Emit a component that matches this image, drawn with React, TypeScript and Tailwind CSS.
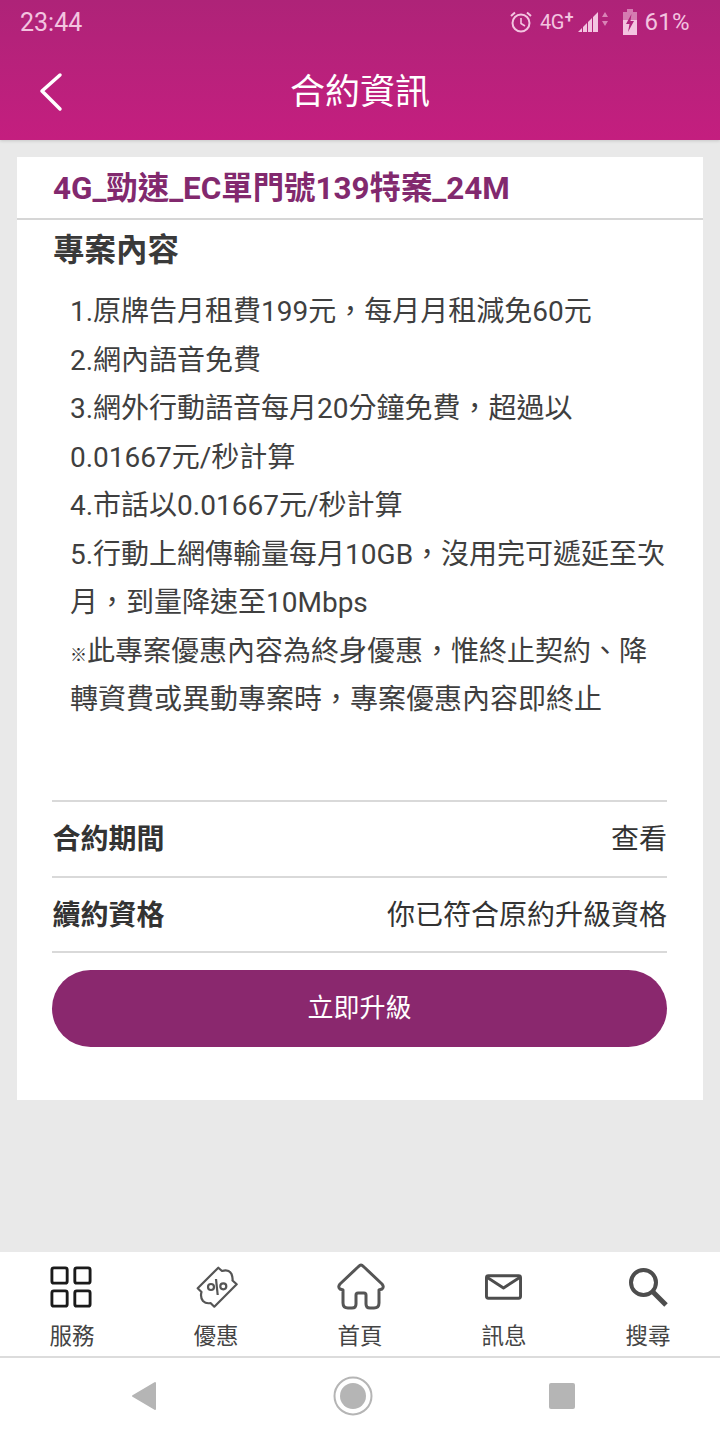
import React from "react";

const FONT = "font-['Roboto','Noto_Sans_CJK_TC',sans-serif]";

const lines: React.ReactNode[] = [
  "1.原牌告月租費199元，每月月租減免60元",
  "2.網內語音免費",
  "3.網外行動語音每月20分鐘免費，超過以",
  "0.01667元/秒計算",
  "4.市話以0.01667元/秒計算",
  "5.行動上網傳輸量每月10GB，沒用完可遞延至次",
  "月，到量降速至10Mbps",
  <>
    <span className="inline-block w-[17px] text-[17px] leading-none font-black text-left text-[#2f2f2f]">※</span>此專案優惠內容為終身優惠，惟終止契約、降
  </>,
  "轉資費或異動專案時，專案優惠內容即終止",
];

function StatusIcons() {
  return (
    <div className="flex items-center text-[#f3c4e0]">
      <svg width="24" height="24" viewBox="0 0 24 24" fill="none" stroke="currentColor" strokeWidth="2" className="mr-[7px]">
        <circle cx="12" cy="13" r="8.5" />
        <path d="M12 8v5.5l4 2.5" strokeWidth="1.6" />
        <path d="M2 6l4-3.5M22 6l-4-3.5" />
      </svg>
      <span className="text-[20px] leading-none tracking-[-0.5px] mr-[1px]">4G</span>
      <span className="text-[16px] leading-none font-bold -mt-[8px] mr-[3px]">+</span>
      <svg width="32" height="24" viewBox="0 0 32 24" fill="currentColor" className="mr-[14px]">
        <path d="M1 22l4-4v4zM6 22v-5l4-4v9zM11 22V12l4-4v14zM16 22V7l5-5v20z" />
        <path d="M25 7l3-5 3 5zM25 11h6l-3 5z" opacity="0.6" />
      </svg>
      <svg width="14" height="26" viewBox="0 0 14 26" className="mr-[8px]">
        <path d="M4 0h6v3h4v8H0V3h4z" fill="currentColor" opacity="0.55" />
        <path d="M0 11h14v15H0z" fill="currentColor" />
        <path d="M8.5 5L3 15h3.5L5 23l6-11H7.5z" fill="#b0237a" />
      </svg>
      <span className="text-[24px] leading-none tracking-[0.3px]">61%</span>
    </div>
  );
}

function NavItem({ label, children }: { label: string; children: React.ReactNode }) {
  return (
    <div className="flex-1 flex flex-col items-center">
      <div className="h-[56px] w-[56px] flex items-center justify-center">{children}</div>
      <span className="mt-[6px] text-[22.5px] leading-[30px] text-[#444]">{label}</span>
    </div>
  );
}

export default function App() {
  return (
    <div className={`${FONT} w-[720px] h-[1440px] bg-[#e9e9e9] flex flex-col overflow-hidden`}>
      <header className="h-[140px] shrink-0 bg-gradient-to-b from-[#ae2378] to-[#c41e7f] flex flex-col shadow-[0_1px_3px_rgba(0,0,0,0.15)]">
        <div className="h-[44px] pl-[20px] pr-[30px] flex items-center justify-between">
          <span className="text-[25px] leading-none text-[#f3c4e0]">23:44</span>
          <StatusIcons />
        </div>
        <div className="flex-1 relative flex items-center justify-center">
          <svg width="30" height="40" viewBox="0 0 30 40" fill="none" stroke="white" strokeWidth="3.5" strokeLinecap="round" strokeLinejoin="round" className="absolute left-[36px] top-[28px]">
            <path d="M24 3L6 19l18 18" />
          </svg>
          <span className="text-[35px] leading-none text-white">合約資訊</span>
        </div>
      </header>

      <main className="flex-1 px-[17px] pt-[17px]">
        <section className="bg-white h-[943px]">
          <h1 className="h-[63px] pl-[36px] pt-[2px] flex items-center text-[31.4px] font-bold text-[#82296e] border-b-2 border-[#d6d6d6]">
            4G_勁速_EC單門號139特案_24M
          </h1>
          <h2 className="pl-[36px] h-[60px] text-[31.5px] leading-[60px] font-bold text-[#3a3a3a] mt-[1px]">專案內容</h2>
          <div className="pl-[53px] pr-[30px] mt-[7px] text-[28px] leading-[48.5px] text-[#3f3f3f]">
            {lines.map((l, i) => (
              <div key={i} className="h-[48.5px] whitespace-nowrap">{l}</div>
            ))}
          </div>
          <div className="ml-[35px] mr-[36px] mt-[75px] border-t-2 border-[#d9d9d9]">
            <div className="h-[76px] pt-[3px] flex items-center justify-between border-b-2 border-[#d9d9d9] text-[#333]">
              <span className="pl-[0.5px] text-[28px] font-bold">合約期間</span>
              <span className="text-[28px]">查看</span>
            </div>
            <div className="h-[75px] pt-[3px] flex items-center justify-between border-b-2 border-[#d9d9d9] text-[#333]">
              <span className="pl-[0.5px] text-[28px] font-bold">續約資格</span>
              <span className="text-[28px]">你已符合原約升級資格</span>
            </div>
            <button className="mt-[17px] w-full h-[77px] rounded-full bg-[#8a286e] text-white text-[26px]">立即升級</button>
          </div>
        </section>
      </main>

      <nav className="h-[104px] shrink-0 bg-white flex pt-[7px]">
        <NavItem label="服務">
          <svg width="42" height="42" viewBox="0 0 44 44" fill="none" stroke="#1a1a1a" strokeWidth="3" className="-ml-[2px]">
            <rect x="2" y="2" width="16" height="16" rx="2" />
            <rect x="26" y="2" width="16" height="16" rx="2" />
            <rect x="2" y="26" width="16" height="16" rx="2" />
            <rect x="26" y="26" width="16" height="16" rx="2" />
          </svg>
        </NavItem>
        <NavItem label="優惠">
          <svg width="56" height="56" viewBox="3 4 56 56" fill="none" stroke="#555" strokeWidth="2.2" strokeLinejoin="round">
            <path d="M33.3 12.7L37 16Q44 14 46.5 19Q48 23 47.5 25.5L51.7 29.3L29.3 51.7L25.5 48Q21 49 18 46Q15 42 16.5 37L12.7 33.3Z" />
            <circle cx="26" cy="32" r="3" />
            <circle cx="38.3" cy="31.3" r="3" />
            <path d="M31 24l1.7 16" />
          </svg>
        </NavItem>
        <NavItem label="首頁">
          <svg width="56" height="56" viewBox="7 4 56 56" fill="none" stroke="#555" strokeWidth="3" strokeLinejoin="round" strokeLinecap="round">
            <path d="M36 10Q35 10 33 12L15 29Q12.5 32 15 34L18 35V48Q18 53 23 53H27Q31 53 31 49V40Q31 38 33 38H39Q41 38 41 40V49Q41 53 45 53H49Q54 53 54 48V35L57 34Q59.5 32 57 29L39 12Q37 10 36 10Z" />
          </svg>
        </NavItem>
        <NavItem label="訊息">
          <svg width="37" height="26" viewBox="0 0 38 26" fill="none" stroke="#4d4d4d" strokeWidth="3" strokeLinejoin="round" className="-ml-[2px]">
            <rect x="1.5" y="1.5" width="35" height="23" rx="2" />
            <path d="M2 3l17 11L36 3" />
          </svg>
        </NavItem>
        <NavItem label="搜尋">
          <svg width="40" height="40" viewBox="0 0 40 40" fill="none" stroke="#4d4d4d">
            <circle cx="15.5" cy="15.5" r="12.5" strokeWidth="4" />
            <path d="M24 24l14 14" strokeWidth="5" />
          </svg>
        </NavItem>
      </nav>

      <footer className="h-[84px] shrink-0 bg-white border-t-2 border-[#dcdcdc] flex items-center justify-center pb-[7px] pr-[14px]">
        <div className="w-[209px] flex justify-center">
          <svg width="26" height="30" viewBox="0 0 26 30" fill="#b5b5b5" stroke="#b5b5b5" strokeWidth="2" strokeLinejoin="round">
            <path d="M24 2v26L2 15z" />
          </svg>
        </div>
        <div className="w-[209px] flex justify-center">
          <svg width="40" height="40" viewBox="0 0 40 40">
            <circle cx="20" cy="20" r="18.5" fill="none" stroke="#b5b5b5" strokeWidth="2" />
            <circle cx="20" cy="20" r="13" fill="#b5b5b5" />
          </svg>
        </div>
        <div className="w-[209px] flex justify-center">
          <div className="w-[26px] h-[26px] bg-[#b5b5b5] rounded-[2px]" />
        </div>
      </footer>
    </div>
  );
}
